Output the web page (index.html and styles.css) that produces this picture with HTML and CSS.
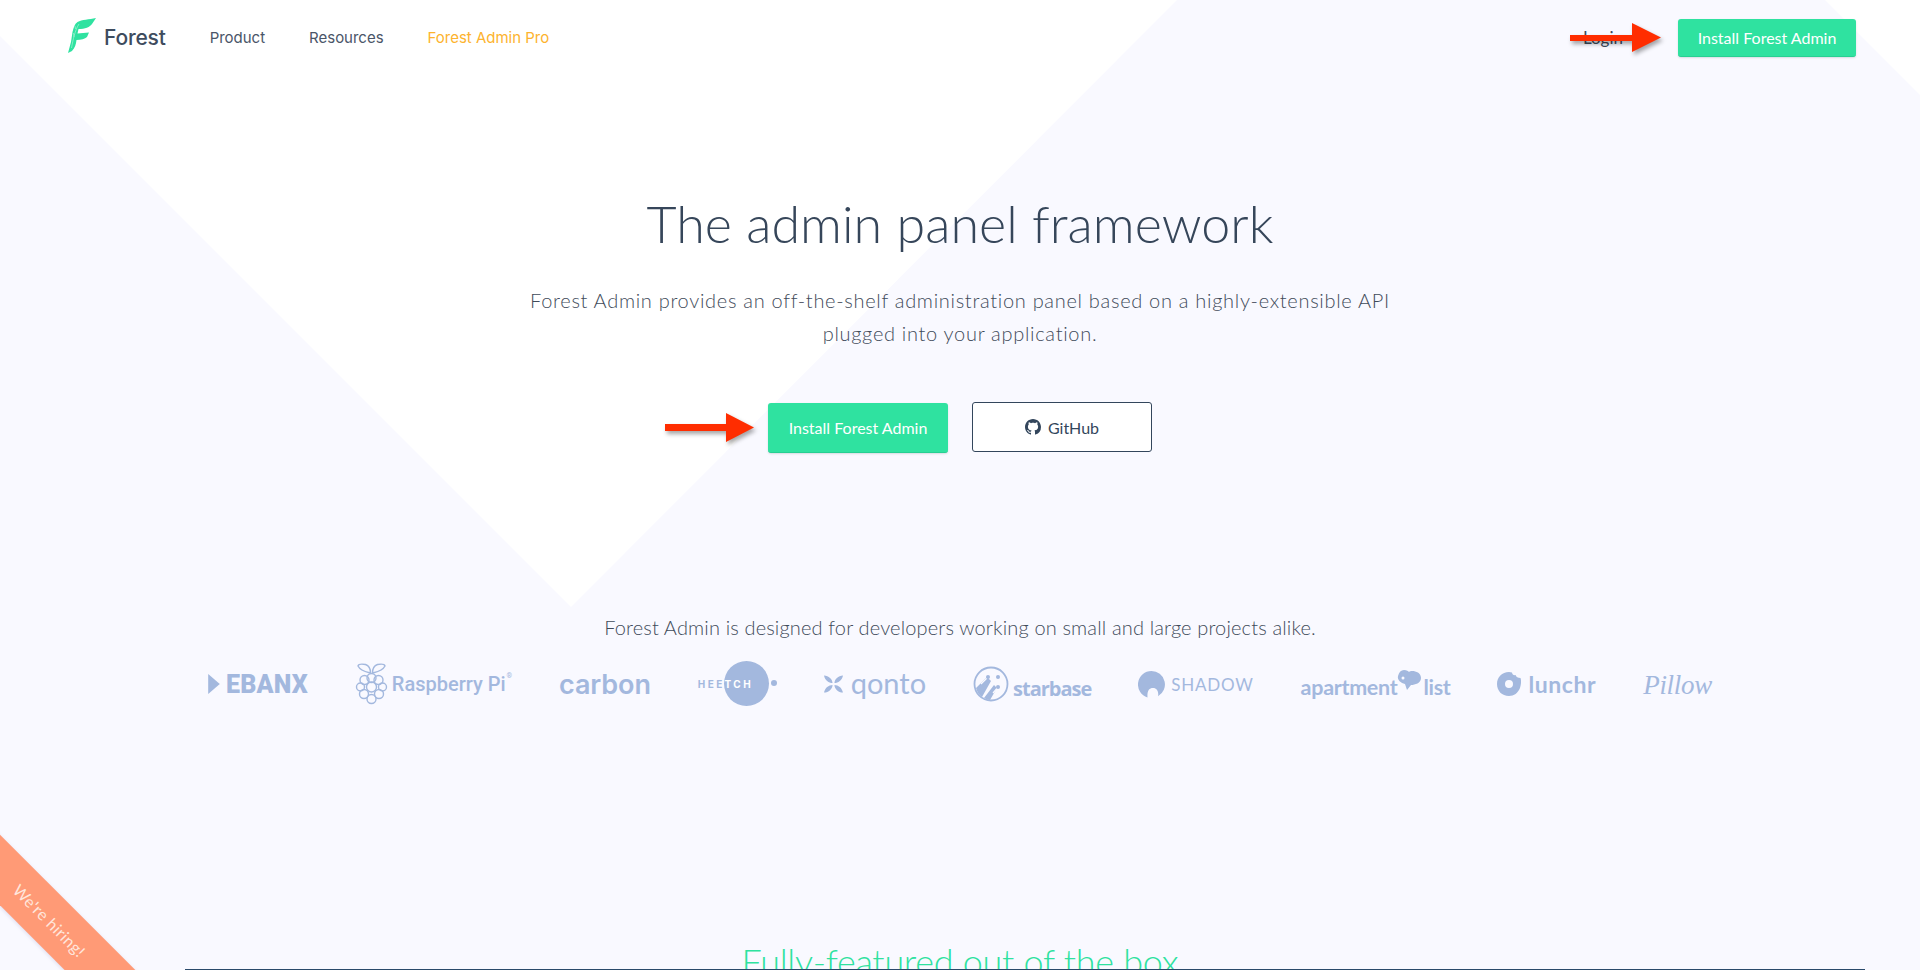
FILE: index.html
```html
<!DOCTYPE html>
<html lang="en">
<head>
<meta charset="utf-8">
<title>Forest Admin</title>
<link rel="stylesheet" href="styles.css">
</head>
<body>
<div class="page">
  <svg class="backdrop" viewBox="0 0 1920 970" aria-hidden="true">
    <polygon class="backdrop-white" points="0,0 1177,0 571,607 0,36"/>
    <polygon class="backdrop-white" points="1825,0 1920,0 1920,95"/>
  </svg>

  <header class="nav">
    <a class="brand">
      <svg class="brand-mark" viewBox="0 0 28 36">
        <path d="M28 0C21 1.500 14 1.500 9.500 4C6.500 6 5.500 10 4.500 14L3 24L0 35L4 33C7 30 8 26 8.500 22C13 22 17 21 19 19L21 14.500C17 15 13 15 9.500 15.500L10.500 11C17 11 22 9 24 6Z"/>
        <path class="vein" d="M3.500 30C5 22 7 12 11 6M6 19L5.500 15M7.500 11L7 8"/>
      </svg>
      <span class="brand-name">Forest</span>
    </a>
    <nav class="nav-links">
      <a>Product</a>
      <a>Resources</a>
      <a class="pro">Forest Admin Pro</a>
    </nav>
    <div class="nav-right">
      <a class="login">Login</a>
      <a class="btn btn-small">Install Forest Admin</a>
    </div>
  </header>

  <section class="hero">
    <h1>The admin panel framework</h1>
    <p class="lead">Forest Admin provides an off-the-shelf administration panel based on a highly-extensible API<br>plugged into your application.</p>
    <div class="actions">
      <a class="btn btn-large">Install Forest Admin</a>
      <a class="btn-outline">
        <svg class="gh" viewBox="0 0 16 16"><path d="M8 0C3.580 0 0 3.580 0 8c0 3.540 2.290 6.530 5.470 7.590.4.070.55-.17.55-.38 0-.19-.01-.82-.01-1.490-2.010.37-2.530-.49-2.690-.94-.09-.23-.48-.94-.82-1.130-.28-.15-.68-.52-.01-.53.63-.01 1.080.58 1.230.82.72 1.210 1.870.87 2.330.66.070-.52.28-.87.51-1.070-1.780-.2-3.640-.89-3.640-3.950 0-.87.31-1.590.82-2.150-.08-.2-.36-1.020.08-2.120 0 0 .67-.21 2.200.82.640-.18 1.320-.27 2-.27s1.360.09 2 .27c1.530-1.040 2.200-.82 2.200-.82.440 1.100.16 1.920.08 2.120.51.560.82 1.270.82 2.150 0 3.070-1.870 3.750-3.650 3.950.29.25.54.73.54 1.480 0 1.070-.01 1.930-.01 2.200 0 .21.15.46.55.38A8.013 8.013 0 0 0 16 8c0-4.420-3.580-8-8-8z"/></svg>
        GitHub
      </a>
    </div>
  </section>

  <section class="customers">
    <p class="customers-title">Forest Admin is designed for developers working on small and large projects alike.</p>
    <div class="logos">
      <div class="logo logo-ebanx">
        <svg viewBox="0 0 11 19" class="i-ebanx"><polygon points="0,0 11,9.500 0,19"/></svg>
        <span>EBANX</span>
      </div>
      <div class="logo logo-rasp">
        <svg viewBox="0 0 32 42" class="i-rasp">
          <g class="line">
            <path d="M15 10C11 9 5 8 2.500 3C3 1 7 1 10 1.500C13 2.500 15 6 15 10Z"/>
            <path d="M17 10C21 9 27 8 29.500 3C29 1 25 1 22 1.500C19 2.500 17 6 17 10Z"/>
            <circle cx="16" cy="15" r="4.500"/>
            <circle cx="9" cy="17" r="4.500"/>
            <circle cx="23" cy="17" r="4.500"/>
            <circle cx="5" cy="24" r="4"/>
            <circle cx="27" cy="24" r="4"/>
            <circle cx="16" cy="24" r="5"/>
            <circle cx="8.500" cy="31" r="4.500"/>
            <circle cx="23.500" cy="31" r="4.500"/>
            <circle cx="16" cy="36" r="4.500"/>
          </g>
        </svg>
        <span>Raspberry Pi</span><sup>®</sup>
      </div>
      <div class="logo logo-carbon"><span>carbon</span></div>
      <div class="logo logo-heetch">
        <i class="heetch-disc"></i>
        <span class="heetch-word">HEE<b>TCH</b></span>
        <i class="heetch-dot"></i>
      </div>
      <div class="logo logo-qonto">
        <svg viewBox="0 0 20 18" class="i-qonto"><path d="M0 0C5 0 9 4 9 8C5 8 1 5 0 0ZM20 0C15 0 11 4 11 8C15 8 19 5 20 0ZM0 18C5 18 9 14 9 10C5 10 1 13 0 18ZM20 18C15 18 11 14 11 10C15 10 19 13 20 18Z"/></svg>
        <span>qonto</span>
      </div>
      <div class="logo logo-starbase">
        <svg viewBox="0 0 36 36" class="i-star">
          <circle class="ring" cx="18" cy="18" r="16.500"/>
          <path d="M3 22L14 11L18 15L9 31C6 29 4 26 3 22ZM11 32L21 19L24 22L17 34C15 34 13 33 11 32Z"/>
          <path class="rays" d="M8 18L14 12M14 25L22 15M20 27L26 20"/>
          <circle cx="15" cy="11" r="2"/><circle cx="25" cy="11" r="2"/><circle cx="25" cy="21" r="2"/>
        </svg>
        <span>starbase</span>
      </div>
      <div class="logo logo-shadow">
        <svg viewBox="0 0 27 27" class="i-shadow"><path d="M13.500 0A13.500 13.500 0 0 1 20 25.300C21 21 19 17 15 17C11 17 9 20 9.500 26.400A13.500 13.500 0 0 1 13.500 0Z"/></svg>
        <span>SHADOW</span>
      </div>
      <div class="logo logo-apt">
        <span>apartment</span>
        <svg viewBox="0 0 24 20" class="i-apt"><path d="M7 0C10 0 11 1 12 2C14 0 24 1 24 8C24 13 18 15 14 15L10 20L8 14C4 13 0 10 1 6C2 2 4 0 7 0Z"/><circle class="hole" cx="6" cy="8" r="1.500"/></svg>
        <span>list</span>
      </div>
      <div class="logo logo-lunchr">
        <svg viewBox="0 0 24 24" class="i-lunchr"><path fill-rule="evenodd" d="M12 0C13 0 14 .2 15 .5C15 2.500 17 3.500 18.500 3C19 5 21 6 23.500 6C24.500 9 24 13 23 16C21 21 17 24 12 24C5 24 0 19 0 12C0 5 5 0 12 0ZM12 8A4 4 0 1 0 12 16A4 4 0 1 0 12 8Z"/></svg>
        <span>lunchr</span>
      </div>
      <div class="logo logo-pillow"><span>Pillow</span></div>
    </div>
  </section>

  <section class="features">
    <h2>Fully-featured out of the box</h2>
  </section>
  <div class="rule"></div>

  <a class="ribbon"><span>We're hiring!</span></a>

  <svg class="arrow arrow-top" viewBox="0 0 91 29"><polygon points="0,12 62,12 62,0 91,14.500 62,29 62,18 0,18"/></svg>
  <svg class="arrow arrow-hero" viewBox="0 0 89 29"><polygon points="0,11 61,11 61,0 89,14.500 61,29 61,18 0,18"/></svg>
</div>
</body>
</html>
```

FILE: styles.css
```css
* { box-sizing: border-box; }
html, body { margin: 0; padding: 0; height: 100%; overflow: hidden; }
body { font-family: "Lato", "Open Sans", sans-serif; color: #3d4a5c; background: #f9f9ff; }
a { text-decoration: none; color: inherit; }

.page { position: relative; height: 970px; width: 1920px; overflow: hidden; background: #f9f9ff; }
.backdrop { position: absolute; inset: 0; width: 1920px; height: 970px; }
.backdrop-white { fill: #fff; }

.nav { position: relative; display: flex; align-items: center; height: 75px; padding: 0 64px 0 68px; }
.brand { display: flex; align-items: center; gap: 8px; margin-right: 44px; }
.brand-mark { width: 28px; height: 36px; fill: #2fe2a0; margin-bottom: 3px; }
.vein { fill: none; stroke: #b9f5dd; stroke-width: .6; }
.brand-name { font-family: "Inter", sans-serif; font-size: 21px; font-weight: 500; color: #3e4c5e; letter-spacing: -.2px; }
.nav-links { display: flex; gap: 44px; font-family: "Inter", sans-serif; font-size: 15px; letter-spacing: -.01px; color: #4a5568; }
.nav-links .pro { color: #fdb32e; }
.nav-right { margin-left: auto; display: flex; align-items: center; gap: 55px; }
.login { font-size: 17px; color: #3e4c5e; }

.btn { display: flex; align-items: center; justify-content: center; background: #2fe2a0; color: #fff; border-radius: 3px; border-bottom: 1px solid #28cf92; box-shadow: 0 1px 2px rgba(30,60,60,.15); }
.btn-small { width: 178px; height: 38px; font-size: 16px; }
.btn-large { width: 180px; height: 50px; margin-top: 1px; font-size: 16px; }

.hero { position: relative; display: flex; flex-direction: column; align-items: center; }
.hero h1 { margin: 116px 0 0; font-size: 52px; font-weight: 300; line-height: 64px; color: #36465a; letter-spacing: .05px; }
.lead { margin: 29px 0 0; font-size: 20px; font-weight: 300; line-height: 33px; text-align: center; color: #3f4b5a; letter-spacing: .7px; }
.actions { display: flex; align-items: flex-start; gap: 24px; margin: 52px 0 0; }
.btn-outline { display: flex; align-items: center; justify-content: center; gap: 7px; width: 180px; height: 50px; border: 1px solid #33465c; border-radius: 3px; background: #fff; font-size: 16px; color: #33465c; }
.gh { width: 16px; height: 16px; fill: #33465c; }

.customers { position: relative; margin-top: 162px; }
.customers-title { margin: 0; text-align: center; font-size: 20px; font-weight: 300; line-height: 24px; color: #3f4b5a; letter-spacing: .15px; }
.logos { display: flex; align-items: center; height: 48px; margin: 21px 0 0 208px; width: 1504px; justify-content: space-between; color: #a3b8de; font-family: "Inter", sans-serif; }
.logo { display: flex; align-items: center; position: relative; }

.logo-ebanx { gap: 6px; font-family: "Roboto", sans-serif; font-size: 25px; font-weight: 900; letter-spacing: .2px; }
.i-ebanx { width: 12px; height: 20px; fill: #a3b8de; }
.logo-rasp { gap: 4px; font-family: "Roboto", sans-serif; font-size: 20px; font-weight: 500; }
.logo-rasp sup { font-size: 7px; align-self: flex-start; margin: 9px 0 0 -3px; }
.i-rasp { width: 33px; height: 42px; }
.line { fill: none; stroke: #a3b8de; stroke-width: 1.4; }
.logo-carbon { font-size: 27px; font-weight: 600; letter-spacing: -.1px; }
.logo-heetch { width: 79px; height: 46px; }
.heetch-disc { position: absolute; left: 26px; top: 0; width: 45px; height: 45px; border-radius: 50%; background: #a3b8de; }
.heetch-word { position: relative; font-size: 10px; font-weight: 700; letter-spacing: 2.4px; color: #a3b8de; }
.heetch-word b { color: #fff; font-weight: 700; }
.heetch-dot { position: absolute; right: 0; top: 19px; width: 6px; height: 6px; border-radius: 50%; background: #a3b8de; }
.logo-qonto { gap: 8px; font-family: "Lato", sans-serif; font-size: 29px; font-weight: 400; }
.logo-qonto span { margin-top: -4px; }
.i-qonto { width: 19px; height: 18px; fill: #a3b8de; }
.logo-starbase { gap: 4px; font-size: 20px; font-weight: 700; letter-spacing: -1px; font-family: "Open Sans", sans-serif; }
.logo-starbase span { margin-top: 8px; }
.i-star { width: 36px; height: 36px; fill: #a3b8de; }
.ring { fill: none; stroke: #a3b8de; stroke-width: 1.800; }
.rays { fill: none; stroke: #f9f9ff; stroke-width: 1.200; }
.logo-shadow { gap: 6px; font-family: "Lato", sans-serif; font-size: 17px; font-weight: 400; letter-spacing: .8px; }
.i-shadow { width: 27px; height: 27px; fill: #a3b8de; }
.logo-apt { font-family: "Lato", sans-serif; font-size: 21.5px; font-weight: 700; letter-spacing: -.3px; }
.logo-apt span { margin-top: 5px; }
.i-apt { width: 24px; height: 20px; fill: #a3b8de; margin: -8px 2px 0 0; }
.i-apt .hole { fill: #f9f9ff; }
.logo-lunchr { gap: 7px; font-family: "Lato", sans-serif; font-size: 23px; font-weight: 700; letter-spacing: .6px; }
.i-lunchr { width: 24px; height: 24px; fill: #a3b8de; }
.logo-pillow { font-family: "Liberation Serif", serif; font-style: italic; font-size: 27px; letter-spacing: -.3px; margin-top: 3px; }

.features { position: relative; margin-top: 231px; text-align: center; }
.features h2 { margin: 0; font-size: 36px; font-weight: 300; line-height: 44px; color: #2fe2a0; letter-spacing: -.3px; }
.rule { position: absolute; left: 185px; right: 55px; top: 969px; height: 1px; background: #2a4a6a; }

.ribbon { position: absolute; left: -87px; top: 883px; width: 250px; height: 50px; padding-left: 34px; display: flex; align-items: center; justify-content: center; background: #ff9a76; color: #ffe6dc; font-size: 16px; font-weight: 400; letter-spacing: .4px; transform: rotate(45deg); box-shadow: 0 1px 4px rgba(120,120,180,.2); }
.arrow { position: absolute; fill: #ff2d00; filter: drop-shadow(2px 3px 2px rgba(0,0,0,.35)); }
.arrow-top { left: 1570px; top: 23px; width: 91px; height: 29px; }
.arrow-hero { left: 665px; top: 413px; width: 89px; height: 29px; }
```
